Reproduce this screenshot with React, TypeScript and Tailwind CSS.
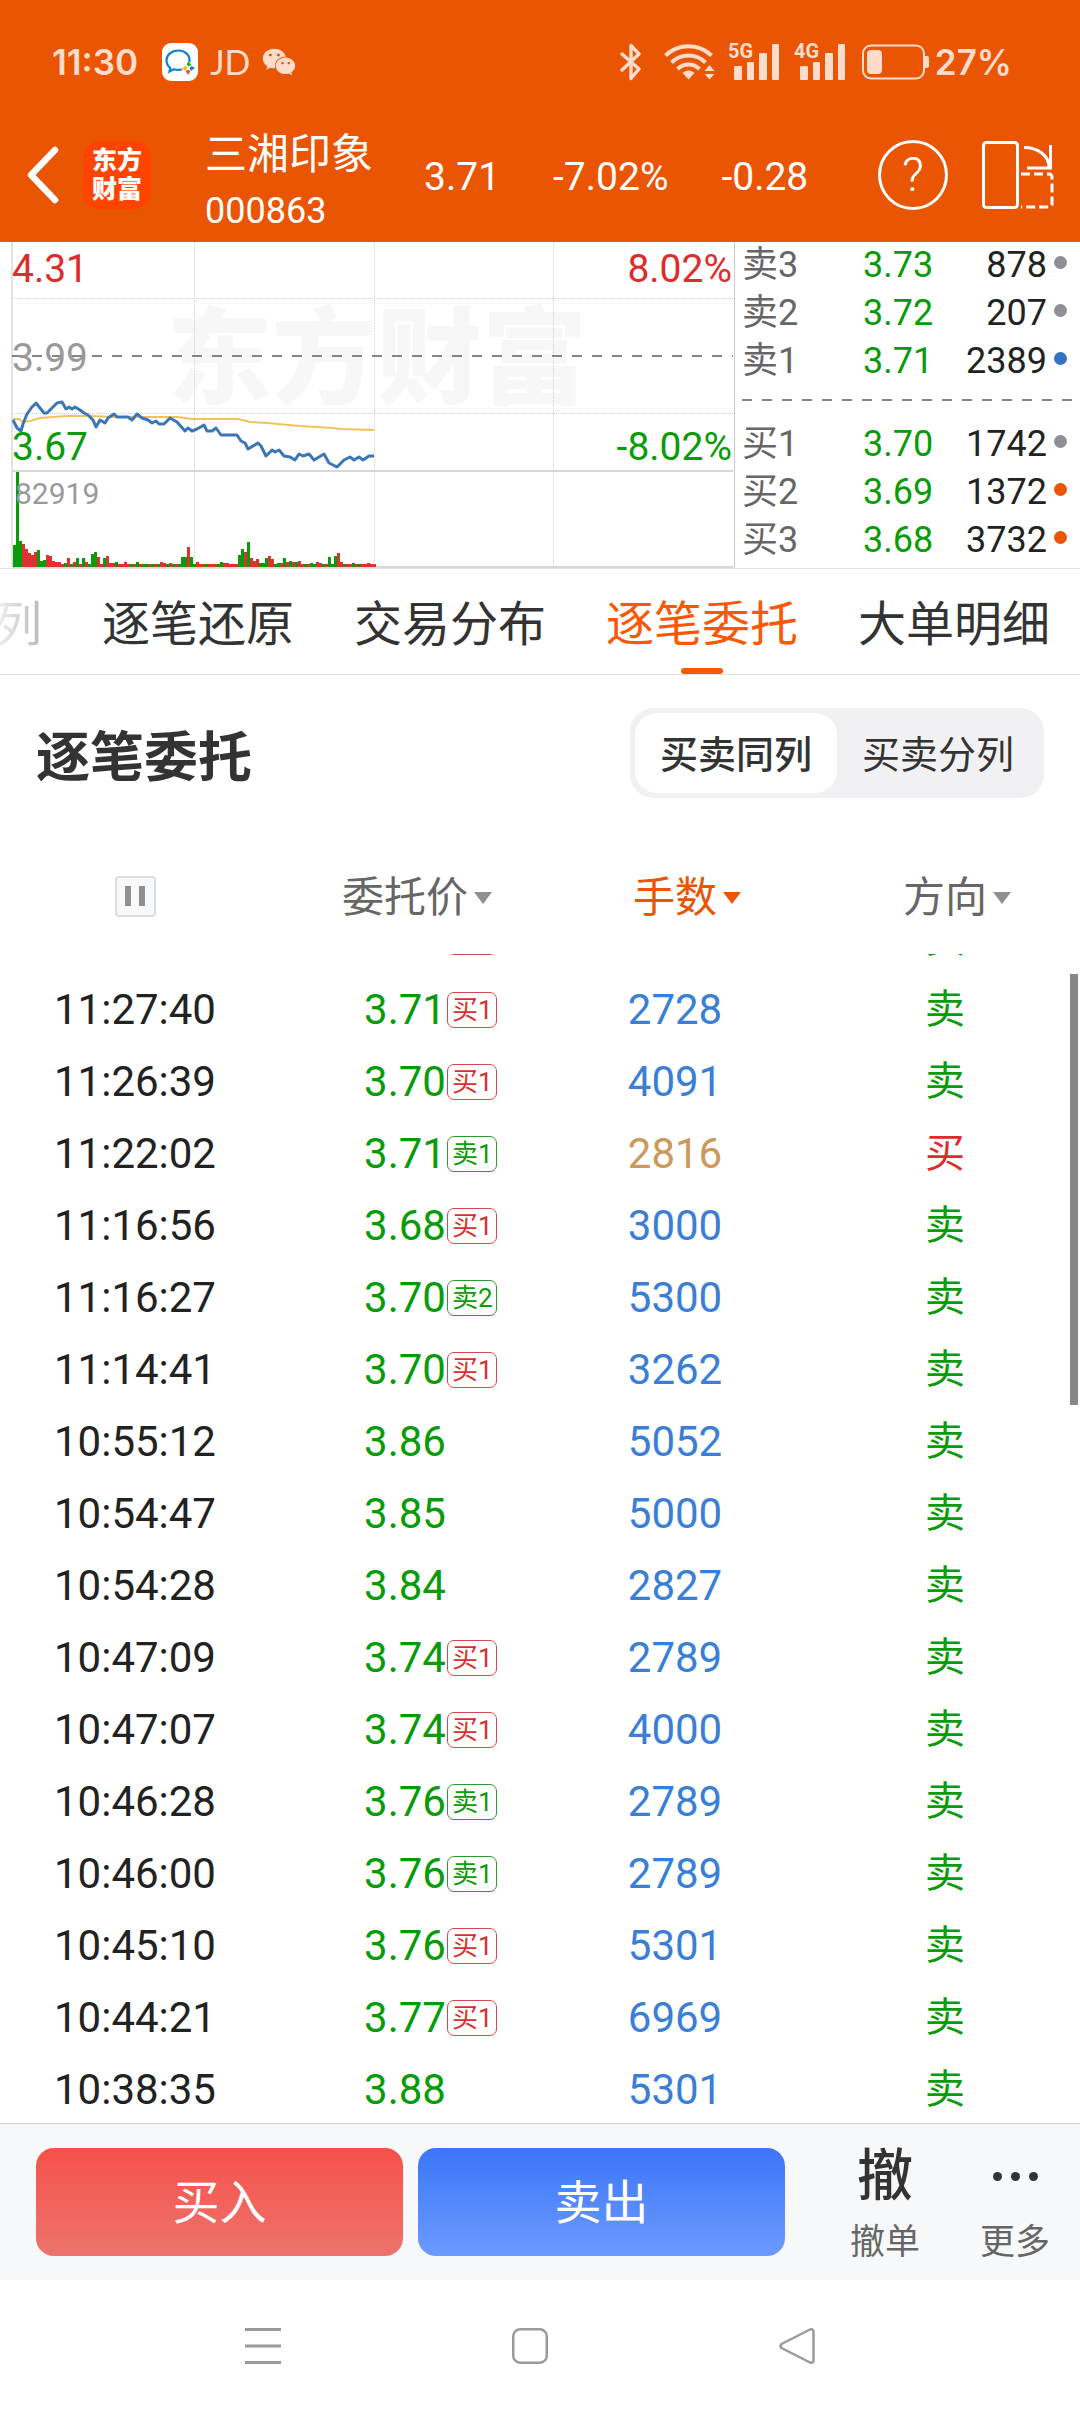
import { useState } from 'react';
import { FaWeixin } from 'react-icons/fa';

type Quote = { label: string; price: string; volume: string; dot: string };

type Order = {
  time: string;
  price: string;
  tag?: string;
  lots: string;
  side: '买' | '卖';
};

const ASKS: Quote[] = [
  { label: '卖3', price: '3.73', volume: '878', dot: 'bg-[#908f95]' },
  { label: '卖2', price: '3.72', volume: '207', dot: 'bg-[#908f95]' },
  { label: '卖1', price: '3.71', volume: '2389', dot: 'bg-[#3273c2]' },
];

const BIDS: Quote[] = [
  { label: '买1', price: '3.70', volume: '1742', dot: 'bg-[#908f95]' },
  { label: '买2', price: '3.69', volume: '1372', dot: 'bg-[#ea5504]' },
  { label: '买3', price: '3.68', volume: '3732', dot: 'bg-[#ea5504]' },
];

const TABS = ['逐笔还原', '交易分布', '逐笔委托', '大单明细'];

const MODES = ['买卖同列', '买卖分列'];

const COLUMNS = [
  { id: 'price', label: '委托价' },
  { id: 'lots', label: '手数' },
  { id: 'side', label: '方向' },
];

const ORDERS: Order[] = [
  { time: '11:27:40', price: '3.71', tag: '买1', lots: '2728', side: '卖' },
  { time: '11:26:39', price: '3.70', tag: '买1', lots: '4091', side: '卖' },
  { time: '11:22:02', price: '3.71', tag: '卖1', lots: '2816', side: '买' },
  { time: '11:16:56', price: '3.68', tag: '买1', lots: '3000', side: '卖' },
  { time: '11:16:27', price: '3.70', tag: '卖2', lots: '5300', side: '卖' },
  { time: '11:14:41', price: '3.70', tag: '买1', lots: '3262', side: '卖' },
  { time: '10:55:12', price: '3.86', lots: '5052', side: '卖' },
  { time: '10:54:47', price: '3.85', lots: '5000', side: '卖' },
  { time: '10:54:28', price: '3.84', lots: '2827', side: '卖' },
  { time: '10:47:09', price: '3.74', tag: '买1', lots: '2789', side: '卖' },
  { time: '10:47:07', price: '3.74', tag: '买1', lots: '4000', side: '卖' },
  { time: '10:46:28', price: '3.76', tag: '卖1', lots: '2789', side: '卖' },
  { time: '10:46:00', price: '3.76', tag: '卖1', lots: '2789', side: '卖' },
  { time: '10:45:10', price: '3.76', tag: '买1', lots: '5301', side: '卖' },
  { time: '10:44:21', price: '3.77', tag: '买1', lots: '6969', side: '卖' },
  { time: '10:38:35', price: '3.88', lots: '5301', side: '卖' },
];

const PRICE_LINE =
  '13,178 17,186 21,189 23,182 27,172 32,165 36,161 40,166 44,171 47,171 52,166 57,161 62,160 66,167 69,165 72,167 75,165 80,168 84,171 88,173 93,178 96,185 100,178 105,181 108,176 114,172 117,175 128,175 132,178 137,172 142,176 148,178 152,181 156,179 159,182 164,182 170,176 177,180 185,189 188,186 192,189 197,187 204,183 207,189 212,189 216,186 221,193 237,193 241,199 245,201 248,207 258,201 261,204 266,214 272,208 275,210 279,208 284,214 290,215 295,218 299,212 303,214 309,212 314,218 324,212 329,221 337,225 344,218 350,215 354,218 359,215 363,218 369,214 374,214';

const AVERAGE_LINE =
  '13,177 19,177 23,180 30,179 40,176 67,174 90,174 113,175 177,175 192,177 238,177 250,180 267,181 300,184 333,186 340,187 374,188';

// one entry per minute: g = falling, r = rising, followed by the height
const VOLUMES =
  'g22 g95 g26 r23 r18 r14 r12 r15 g17 g6 g7 r12 r11 r6 r5 r5 r3 g4 r9 g3 r5 g9 r3 g9 r5 g3 g13 g15 r10 r3 g9 r11 r4 r4 g5 r3 r3 r5 r3 g3 r3 g5 r3 g3 g3 r3 g3 r3 g3 r5 r4 g3 r4 g3 r3 g3 g10 g10 r20 g10 g3 r5 r3 r3 g3 r3 r3 r3 g3 g5 r4 r4 r3 r3 r3 g12 g18 r15 g25 r9 r6 r8 g4 g4 g9 r11 r8 g3 g4 r4 g9 r5 g6 r5 g5 r6 r3 g3 r3 g4 g3 r5 r4 g3 r3 g10 g3 g11 r14 r5 g3 r3 r3 g4 r3 g3 r3 r3 r4 r3 r3'
    .split(' ')
    .map((v) => ({ up: v[0] === 'r', size: Number(v.slice(1)) }));

function SignalBars({ label }: { label: string }) {
  return (
    <svg className="overflow-visible" width="52" height="38" viewBox="0 0 52 38" fill="currentColor" role="img" aria-label={label}>
      <text x="0" y="15" fontSize="20" fontWeight="700" fontFamily="Roboto, sans-serif">{label}</text>
      <rect x="6" y="23" width="8" height="14" rx="1" />
      <rect x="19" y="19" width="7" height="18" rx="1" />
      <rect x="31" y="10" width="8" height="27" rx="1" />
      <rect x="44" y="1" width="7" height="36" rx="1" />
    </svg>
  );
}

function StatusBar() {
  return (
    <div className="flex h-[112px] items-center pl-[52px] pr-[68px] pt-[12px] text-[#fddccb]">
      <span className="font-['Inter',sans-serif] text-[35px] font-semibold leading-[40px]">11:30</span>
      <svg className="ml-6" width="36" height="38" viewBox="0 0 36 38" fill="none">
        <rect width="36" height="38" rx="9" fill="#fff" />
        <path d="M27.5 19c.8-7-4.500-11.500-11-11.500C9.500 7.500 4.500 12 4.500 17.500c0 3.500 1.700 5.800 3.800 7.300L7.500 28.500l4.500-2.200c2.500.8 5.500.8 8 .2" stroke="#1480cf" strokeWidth="2.200" />
        <path d="M26.500 18l3 4-3 1.500-2-2z" fill="#2fae2c" />
        <path d="M33 25l-4 3-1.500-3 2-2z" fill="#1480cf" />
        <path d="M26 32l-2.500-4 3-1.500 2 2z" fill="#ee5a2a" />
        <path d="M20 26l3.500-3.500 2 2.500-2 2.500z" fill="#f6b80c" />
      </svg>
      <span className="ml-3 font-['Lato',sans-serif] text-[34px] leading-[40px]">JD</span>
      <FaWeixin className="ml-3 size-[34px]" />
      <div className="ml-auto flex items-center">
        <svg width="22" height="38" viewBox="0 0 22 38" fill="none" stroke="currentColor" strokeWidth="3.400" strokeLinejoin="round" strokeLinecap="round">
          <path d="M2 11l17 15-8 9.500V2.500L19 11 2 27" />
        </svg>
        <svg className="ml-[22px]" width="52" height="38" viewBox="0 0 52 38" fill="none" stroke="currentColor" strokeWidth="4">
          <path d="M1.500 12.500a33 33 0 0 1 46 0" />
          <path d="M7.500 19.500a24 24 0 0 1 34 0" />
          <path d="M13.500 26a15.500 15.500 0 0 1 22 0" />
          <path d="M24.500 36.500l-6-6.500c3-3.500 9-3.500 12 0z" fill="currentColor" stroke="none" />
          <path d="M45.500 22l5 6h-10zM40.500 31h10l-5 5.500z" fill="currentColor" stroke="none" />
        </svg>
        <div className="ml-3 flex gap-[14px]">
          <SignalBars label="5G" />
          <SignalBars label="4G" />
        </div>
        <svg className="ml-4" width="68" height="36" viewBox="0 0 68 36" fill="none">
          <rect x="1" y="1.500" width="61" height="33" rx="8" stroke="currentColor" strokeWidth="2" />
          <rect x="5" y="6" width="15" height="24" rx="4" fill="currentColor" />
          <path d="M63 12h2a2 2 0 0 1 2 2v8a2 2 0 0 1-2 2h-2z" fill="currentColor" />
        </svg>
        <span className="ml-[5px] font-['Inter',sans-serif] text-[35px] font-semibold leading-[40px]">27%</span>
      </div>
    </div>
  );
}

function Header() {
  return (
    <header className="bg-[#ea5504] text-white">
      <StatusBar />
      <div className="flex h-[130px] items-center pb-1 pl-[26px] pr-[26px]">
        <button type="button" aria-label="返回">
          <svg width="34" height="58" viewBox="0 0 34 58" fill="none" stroke="currentColor" strokeWidth="6.500" strokeLinecap="round" strokeLinejoin="round">
            <path d="M29 4L5 29l24 25" />
          </svg>
        </button>
        <div className="ml-[23px] flex size-[68px] flex-col items-center justify-center rounded-[16px] bg-[#ff4400] text-[25px] font-black leading-[29px]">
          <span>东方</span>
          <span>财富</span>
        </div>
        <div className="ml-[54px] flex flex-col pt-4 leading-[57px]">
          <h1 className="text-[42px]">三湘印象</h1>
          <span className="text-[36px]">000863</span>
        </div>
        <div className="ml-[51px] flex gap-[53px] pt-1 text-[39px]">
          <span>3.71</span>
          <span>-7.02%</span>
          <span>-0.28</span>
        </div>
        <div className="ml-auto flex items-center gap-[34px]">
          <button type="button" aria-label="帮助" className="flex size-[70px] items-center justify-center rounded-full border-[3px] border-white text-[48px] font-light leading-none">
            ?
          </button>
          <button type="button" aria-label="切换横屏">
            <svg width="72" height="68" viewBox="0 0 72 68" fill="none" stroke="currentColor" strokeWidth="3">
              <rect x="1.500" y="1.500" width="34" height="65" rx="3" />
              <path d="M42 6.500c14 0 25 8 25 20M68.500 4v23H45" />
              <path d="M39 33h28a3 3 0 0 1 3 3v27a3 3 0 0 1-3 3H39" strokeDasharray="9 4" />
            </svg>
          </button>
        </div>
      </div>
    </header>
  );
}

function IntradayChart() {
  return (
    <svg className="block h-auto w-full font-['Roboto','Noto_Sans_CJK_SC',sans-serif]" viewBox="0 0 735 326" fill="none">
      <text x="167" y="153" fontSize="105" fontWeight="900" fill="#f7f7f7">东方财富</text>
      <g stroke="#cfcfcf" strokeDasharray="1 1">
        <path d="M194.500 0V325M374.500 0V325M553.500 0V325M12 56.500H733M12 171.500H733" />
      </g>
      <path d="M12 0V325" stroke="#e2e2e2" strokeWidth="2" />
      <path d="M12 229H733M12 325H733" stroke="#d8d8d8" strokeWidth="2" />
      <path d="M734.500 0V326" stroke="#c8c8c8" />
      <path d="M12 114H733" stroke="#858585" strokeWidth="2" strokeDasharray="10 10" />
      <polyline points={AVERAGE_LINE} stroke="#f2c15c" strokeWidth="2" />
      <polyline points={PRICE_LINE} stroke="#3a76b8" strokeWidth="3" strokeLinejoin="round" />
      {VOLUMES.map((v, i) => (
        <rect
          key={i}
          x={13 + i * 3}
          y={325 - v.size}
          width="3"
          height={v.size}
          fill={v.up ? '#e03131' : '#099b09'}
        />
      ))}
      <g fontSize="39">
        <text x="12" y="40" fill="#dd2c2c">4.31</text>
        <text x="12" y="129" fill="#999">3.99</text>
        <text x="12" y="218" fill="#099b09">3.67</text>
        <text x="732" y="40" textAnchor="end" fill="#dd2c2c">8.02%</text>
        <text x="732" y="218" textAnchor="end" fill="#099b09">-8.02%</text>
      </g>
      <text x="15" y="262" fontSize="30" fill="#999">82919</text>
    </svg>
  );
}

function QuoteRows({ quotes }: { quotes: Quote[] }) {
  return (
    <div className="flex flex-col gap-1 pr-[13px] text-[36px] leading-[44px]">
      {quotes.map((q) => (
        <div key={q.label} className="flex items-center">
          <span className="w-[121px] text-[#666]">{q.label}</span>
          <span className="text-[#099b09]">{q.price}</span>
          <span className="ml-auto text-[#222]">{q.volume}</span>
          <span className={`mb-[6px] ml-[7px] size-[13px] rounded-full ${q.dot}`} />
        </div>
      ))}
    </div>
  );
}

function TrendPanel() {
  return (
    <section className="grid grid-cols-[735fr_345fr] border-b border-[#e2e2e2]">
      <IntradayChart />
      <div className="pl-[7px] pt-[1px]">
        <QuoteRows quotes={ASKS} />
        <svg className="mb-[21px] mt-4 block h-[2px] w-full">
          <path d="M0 1H330" stroke="#858585" strokeWidth="2" strokeDasharray="10 10" />
        </svg>
        <QuoteRows quotes={BIDS} />
      </div>
    </section>
  );
}

function PriceTag({ text }: { text: string }) {
  const color = text.startsWith('买')
    ? 'border-[#cf4a4a] text-[#d62f2f]'
    : 'border-[#2f9a2f] text-[#099b09]';
  return (
    <span className={`absolute left-full top-1/2 ml-[1px] flex h-9 w-[50px] -translate-y-1/2 items-center rounded-[7px] border pl-1 text-[26px] leading-none ${color}`}>
      {text}
    </span>
  );
}

function OrderTable() {
  const [sortBy, setSortBy] = useState('lots');

  return (
    <div className="relative">
      <table className="w-full table-fixed text-center text-[42px] leading-[48px]">
        <thead>
          <tr className="h-[116px]">
            <th className="p-0">
              <button type="button" aria-label="暂停" className="mx-auto flex size-[41px] items-center justify-center gap-2 rounded-[4px] border-2 border-[#dcdee2] bg-[#f6f8fa]">
                <span className="h-5 w-[6px] bg-[#8f8f8f]" />
                <span className="h-5 w-[6px] bg-[#8f8f8f]" />
              </button>
            </th>
            {COLUMNS.map((c) => (
              <th key={c.id} className="p-0 pt-1 font-normal">
                <button
                  type="button"
                  onClick={() => setSortBy(c.id)}
                  className={`relative ${sortBy === c.id ? 'text-[#ea5504]' : 'text-[#666]'}`}
                >
                  {c.label}
                  <svg
                    className={`absolute left-full top-1/2 ml-[6px] -translate-y-1/2 ${sortBy === c.id ? 'text-[#ea5504]' : 'text-[#8e8e93]'}`}
                    width="18"
                    height="12"
                    viewBox="0 0 18 12"
                    fill="currentColor"
                  >
                    <path d="M0 0h18L9 12z" />
                  </svg>
                </button>
              </th>
            ))}
          </tr>
        </thead>
        <tbody>
          {/* row scrolled under the header */}
          <tr className="h-[19px]">
            <td className="p-0" />
            <td className="p-0">
              <div className="flex h-[19px] items-end justify-center overflow-hidden">
                <div className="relative h-[72px] w-[82px] shrink-0">
                  <PriceTag text="买1" />
                </div>
              </div>
            </td>
            <td className="p-0" />
            <td className="p-0">
              <div className="flex h-[19px] items-end justify-center overflow-hidden">
                <div className="h-[72px] shrink-0 pt-1 text-[40px] leading-[68px] text-[#099b09]">卖</div>
              </div>
            </td>
          </tr>
          {ORDERS.map((o) => (
            <tr key={o.time} className="h-[72px]">
              <td className="p-0 pt-[2px] text-[#222]">{o.time}</td>
              <td className="p-0 pt-[2px] text-[#099b09]">
                <span className="relative inline-block">
                  {o.price}
                  {o.tag && <PriceTag text={o.tag} />}
                </span>
              </td>
              <td className={`p-0 pt-[2px] ${o.side === '买' ? 'text-[#c99a5b]' : 'text-[#3a7fd5]'}`}>{o.lots}</td>
              <td className={`p-0 pt-[2px] text-[40px] ${o.side === '买' ? 'text-[#dd2c2c]' : 'text-[#099b09]'}`}>{o.side}</td>
            </tr>
          ))}
        </tbody>
      </table>
      <div className="absolute right-[2px] top-[136px] h-[431px] w-2 bg-[#888]" />
    </div>
  );
}

function BottomBar() {
  return (
    <footer className="fixed inset-x-0 bottom-0">
      <div className="flex h-[157px] items-center border-t border-[#ccd2d6] bg-[#f7f8fa] pl-9">
        <div className="flex flex-1 gap-[15px] text-[47px] text-white">
          <button type="button" className="h-[108px] flex-1 rounded-[18px] bg-linear-to-b from-[#f5504a] to-[#ed736d] pt-[2px]">
            买入
          </button>
          <button type="button" className="h-[108px] flex-1 rounded-[18px] bg-linear-to-b from-[#3b76f8] to-[#6c9aff] pt-[2px]">
            卖出
          </button>
        </div>
        <div className="ml-[35px] flex pb-2 text-[35px] leading-[44px] text-[#666]">
          <button type="button" className="flex w-[130px] flex-col items-center">
            <span className="flex h-[90px] items-center text-[56px] font-medium text-[#333]">撤</span>
            <span>撤单</span>
          </button>
          <button type="button" className="flex w-[130px] flex-col items-center">
            <span className="flex h-[90px] items-center gap-[9px]">
              <span className="size-[9px] rounded-full bg-[#333]" />
              <span className="size-[9px] rounded-full bg-[#333]" />
              <span className="size-[9px] rounded-full bg-[#333]" />
            </span>
            <span>更多</span>
          </button>
        </div>
      </div>
      <nav className="grid h-[132px] grid-cols-3 place-items-center bg-white pl-[129px] pr-[149px] text-[#9a9a9a]">
        <button type="button" aria-label="最近任务">
          <svg width="36" height="38" viewBox="0 0 36 38" fill="none" stroke="currentColor" strokeWidth="3">
            <path d="M0 2.500h36M0 19h36M0 35.500h36" />
          </svg>
        </button>
        <button type="button" aria-label="主屏幕">
          <svg width="36" height="38" viewBox="0 0 36 38" fill="none" stroke="currentColor" strokeWidth="2.500">
            <rect x="1.250" y="2.250" width="33.500" height="33.500" rx="7" />
          </svg>
        </button>
        <button type="button" aria-label="后退">
          <svg width="36" height="38" viewBox="0 0 36 38" fill="none" stroke="currentColor" strokeWidth="2.500" strokeLinejoin="round">
            <path d="M31 2.500L2.500 17q-2 2 0 4L31 35.500q3.500 1 3.500-2v-29q0-3-3.500-2z" />
          </svg>
        </button>
      </nav>
    </footer>
  );
}

export default function App() {
  const [tab, setTab] = useState('逐笔委托');
  const [mode, setMode] = useState('买卖同列');

  return (
    <div className="overflow-x-hidden bg-white pb-[287px] font-['Roboto','Noto_Sans_CJK_SC',sans-serif]">
      <Header />
      <TrendPanel />

      {/* Tabs */}
      <nav className="flex h-[106px] gap-[60px] overflow-hidden whitespace-nowrap border-b border-[#dededf] text-[48px] text-[#333]">
        <button type="button" className="-ml-[6px] bg-linear-to-r from-[#f4f4f4] to-[#b8b8b8] bg-clip-text pt-[6px] text-transparent">
          列
        </button>
        {TABS.map((t) => (
          <button
            key={t}
            type="button"
            onClick={() => setTab(t)}
            className={`relative pt-[6px] ${tab === t ? 'text-[#fa5805]' : ''}`}
          >
            {t}
            {tab === t && (
              <span className="absolute bottom-0 left-1/2 h-[6px] w-[42px] -translate-x-1/2 rounded-[3px] bg-[#fa5805]" />
            )}
          </button>
        ))}
      </nav>

      {/* Title and layout switch */}
      <div className="flex items-center justify-between px-9 pb-10 pt-[33px]">
        <h2 className="pt-3 text-[54px] font-bold leading-[64px] text-[#333]">逐笔委托</h2>
        <div className="flex h-[90px] rounded-[24px] bg-[#f1f1f4] p-[5px] text-[38px] text-[#333]">
          {MODES.map((m) => (
            <button
              key={m}
              type="button"
              onClick={() => setMode(m)}
              className={`w-[202px] rounded-[22px] pt-1 ${mode === m ? 'bg-white font-medium' : ''}`}
            >
              {m}
            </button>
          ))}
        </div>
      </div>

      <OrderTable />
      <BottomBar />
    </div>
  );
}
